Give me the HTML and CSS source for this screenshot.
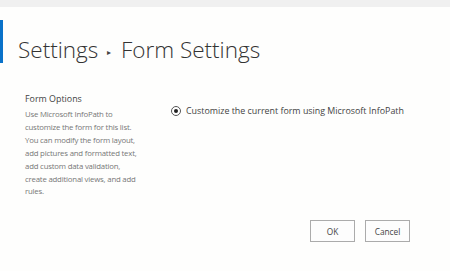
FILE: index.html
```html
<!DOCTYPE html>
<html>
<head>
<meta charset="utf-8">
<link rel="stylesheet" href="styles.css">
</head>
<body>
<div class="topbar"></div>
<div class="header">
  <h1 class="title">Settings <span class="sep">&#9656;</span> Form Settings</h1>
</div>
<div class="section">
  <div class="desc">
    <div class="desc-title">Form Options</div>
    <div class="desc-text">Use Microsoft InfoPath to customize the form for this list. You can modify the form layout, add pictures and formatted text, add custom data validation, create additional views, and add rules.</div>
  </div>
  <div class="options">
    <label class="option"><span class="radio"><span class="dot"></span></span>Customize the current form using Microsoft InfoPath</label>
  </div>
</div>
<div class="buttons">
  <button class="btn">OK</button>
  <button class="btn">Cancel</button>
</div>
</body>
</html>
```
FILE: styles.css
```css
html, body {
  margin: 0;
  padding: 0;
  background: #fefefd;
  font-family: "Open Sans", "Liberation Sans", sans-serif;
}
.topbar {
  height: 7px;
  background: #f0f0f0;
}
.header {
  margin-top: 13px;
  height: 43px;
  border-left: 3px solid #0a72c9;
  padding-left: 15px;
  display: flex;
  align-items: flex-end;
}
.title {
  margin: 0;
  font-weight: 300;
  font-size: 22.5px;
  line-height: 22px;
  color: #333;
}
.sep {
  font-size: 8px;
  vertical-align: 3px;
  padding: 0 4px 0 3px;
  color: #444;
}
.section {
  display: flex;
  margin-top: 29px;
  padding-left: 25px;
}
.desc {
  width: 116px;
}
.desc-title {
  font-size: 8.9px;
  color: #444;
  line-height: 13px;
}
.desc-text {
  margin-top: 3px;
  font-size: 7.8px;
  letter-spacing: -0.2px;
  line-height: 12.9px;
  color: #777;
}
.options {
  margin-left: 30px;
  padding-top: 12px;
}
.option {
  display: flex;
  align-items: center;
  font-size: 8.9px;
  color: #444;
}
.radio {
  width: 8px;
  height: 8px;
  border: 1px solid #555;
  border-radius: 50%;
  display: flex;
  align-items: center;
  justify-content: center;
  margin-right: 5px;
  background: #fff;
}
.dot {
  width: 4px;
  height: 4px;
  border-radius: 50%;
  background: #222;
}
.buttons {
  display: flex;
  justify-content: flex-end;
  gap: 10px;
  margin-top: 22px;
  padding-right: 40px;
}
.btn {
  width: 45px;
  height: 22px;
  border: 1px solid #ababab;
  background: #fdfdfd;
  font-family: "Open Sans", "Liberation Sans", sans-serif;
  font-size: 8.3px;
  color: #444;
  padding: 0;
}
```
